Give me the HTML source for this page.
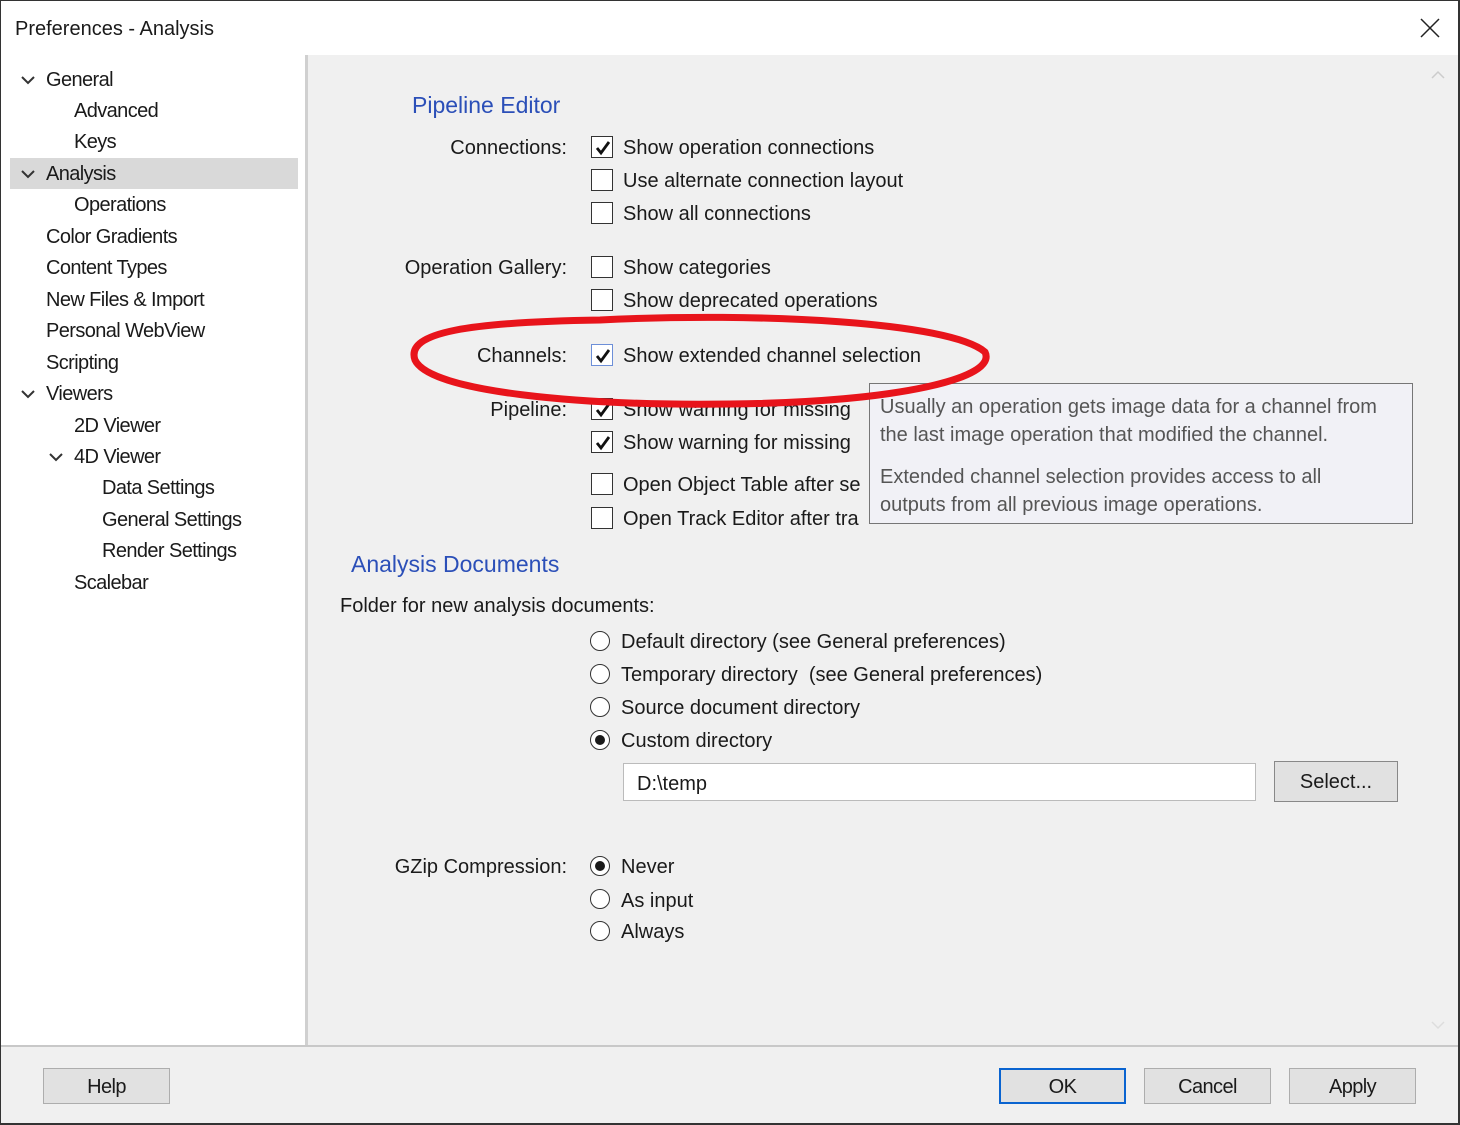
<!DOCTYPE html>
<html><head><meta charset="utf-8"><style>
*{margin:0;padding:0;box-sizing:border-box}
body{width:1460px;height:1125px;position:relative;overflow:hidden;background:#f0f0f0;font-family:"Segoe UI","Liberation Sans",sans-serif;font-size:20px;color:#1a1a1a}
.a{position:absolute;white-space:nowrap;line-height:24px}
.t{letter-spacing:-0.6px}
.r{position:absolute;white-space:nowrap;line-height:24px;text-align:right;right:893px}
.cb{position:absolute;left:591px;width:22px;height:22px;border:1px solid #333;background:#fff}
.cb svg{position:absolute;left:2px;top:2px}
.rd{position:absolute;left:590px;width:20px;height:20px;border:1px solid #333;border-radius:50%;background:#fff}
.rd.on::after{content:"";position:absolute;left:4px;top:4px;width:10px;height:10px;border-radius:50%;background:#1a1a1a}
.btn{position:absolute;height:36px;width:127px;background:#e1e1e1;border:1px solid #adadad;text-align:center;line-height:34px}
.chev{position:absolute}
h2{position:absolute;font-weight:normal;font-size:23px;color:#2b4fb8;line-height:28px;white-space:nowrap}
</style></head><body>
<div style="position:absolute;left:0;top:0;width:1460px;height:55px;background:#fff"></div>
<div class="a" style="left:15px;top:17px;font-size:20px">Preferences - Analysis</div>
<svg class="chev" style="left:1420px;top:18px" width="20" height="20"><path d="M1 1L19 19M19 1L1 19" stroke="#222" stroke-width="1.5"/></svg>
<!-- tree -->
<div style="position:absolute;left:0;top:55px;width:305px;height:990px;background:#fff"></div>
<div style="position:absolute;left:305px;top:55px;width:3px;height:990px;background:#d0d0d0"></div>
<div style="position:absolute;left:10px;top:158px;width:288px;height:31px;background:#d9d9d9"></div>
<svg class="chev" style="left:20px;top:75px" width="16" height="10"><path d="M2 2L8 8L14 2" stroke="#333" stroke-width="2" fill="none"/></svg>
<svg class="chev" style="left:20px;top:169px" width="16" height="10"><path d="M2 2L8 8L14 2" stroke="#333" stroke-width="2" fill="none"/></svg>
<svg class="chev" style="left:20px;top:389px" width="16" height="10"><path d="M2 2L8 8L14 2" stroke="#333" stroke-width="2" fill="none"/></svg>
<svg class="chev" style="left:48px;top:452px" width="16" height="10"><path d="M2 2L8 8L14 2" stroke="#333" stroke-width="2" fill="none"/></svg>
<div class="a t" style="left:46px;top:68px">General</div>
<div class="a t" style="left:74px;top:99px">Advanced</div>
<div class="a t" style="left:74px;top:130px">Keys</div>
<div class="a t" style="left:46px;top:162px">Analysis</div>
<div class="a t" style="left:74px;top:193px">Operations</div>
<div class="a t" style="left:46px;top:225px">Color Gradients</div>
<div class="a t" style="left:46px;top:256px">Content Types</div>
<div class="a t" style="left:46px;top:288px">New Files &amp; Import</div>
<div class="a t" style="left:46px;top:319px">Personal WebView</div>
<div class="a t" style="left:46px;top:351px">Scripting</div>
<div class="a t" style="left:46px;top:382px">Viewers</div>
<div class="a t" style="left:74px;top:414px">2D Viewer</div>
<div class="a t" style="left:74px;top:445px">4D Viewer</div>
<div class="a t" style="left:102px;top:476px">Data Settings</div>
<div class="a t" style="left:102px;top:508px">General Settings</div>
<div class="a t" style="left:102px;top:539px">Render Settings</div>
<div class="a t" style="left:74px;top:571px">Scalebar</div>
<!-- scroll arrows -->
<svg class="chev" style="left:1430px;top:70px" width="16" height="10"><path d="M2 8L8 2L14 8" stroke="#ccc" stroke-width="1.5" fill="none"/></svg>
<svg class="chev" style="left:1430px;top:1020px" width="16" height="10"><path d="M2 2L8 8L14 2" stroke="#ddd" stroke-width="1.5" fill="none"/></svg>
<!-- pipeline editor -->
<h2 style="left:412px;top:91px">Pipeline Editor</h2>
<div class="r" style="top:136px">Connections:</div>
<div class="cb" style="top:136px"><svg width="18" height="18"><path d="M3 9L7 14L15 3" stroke="#111" stroke-width="2.8" fill="none"/></svg></div>
<div class="a" style="left:623px;top:136px">Show operation connections</div>
<div class="cb" style="top:169px"></div><div class="a" style="left:623px;top:169px">Use alternate connection layout</div>
<div class="cb" style="top:202px"></div><div class="a" style="left:623px;top:202px">Show all connections</div>
<div class="r" style="top:256px">Operation Gallery:</div>
<div class="cb" style="top:256px"></div><div class="a" style="left:623px;top:256px">Show categories</div>
<div class="cb" style="top:289px"></div><div class="a" style="left:623px;top:289px">Show deprecated operations</div>
<div class="r" style="top:344px">Channels:</div>
<div class="cb" style="top:344px;border-color:#6d8fd8"><svg width="18" height="18"><path d="M3 9L7 14L15 3" stroke="#111" stroke-width="2.8" fill="none"/></svg></div>
<div class="a" style="left:623px;top:344px">Show extended channel selection</div>
<div class="r" style="top:398px">Pipeline:</div>
<div class="cb" style="top:398px"><svg width="18" height="18"><path d="M3 9L7 14L15 3" stroke="#111" stroke-width="2.8" fill="none"/></svg></div>
<div class="a" style="left:623px;top:398px">Show warning for missing</div>
<div class="cb" style="top:431px"><svg width="18" height="18"><path d="M3 9L7 14L15 3" stroke="#111" stroke-width="2.8" fill="none"/></svg></div>
<div class="a" style="left:623px;top:431px">Show warning for missing</div>
<div class="cb" style="top:473px"></div><div class="a" style="left:623px;top:473px">Open Object Table after se</div>
<div class="cb" style="top:507px"></div><div class="a" style="left:623px;top:507px">Open Track Editor after tra</div>
<!-- tooltip -->
<div style="position:absolute;left:869px;top:383px;width:544px;height:141px;background:#f1f1f6;border:1px solid #767676"></div>
<div class="a" style="left:880px;top:395px;color:#555">Usually an operation gets image data for a channel from</div>
<div class="a" style="left:880px;top:423px;color:#555">the last image operation that modified the channel.</div>
<div class="a" style="left:880px;top:465px;color:#555">Extended channel selection provides access to all</div>
<div class="a" style="left:880px;top:493px;color:#555">outputs from all previous image operations.</div>
<!-- red ellipse -->
<svg style="position:absolute;left:0;top:0" width="1460" height="1125"><path d="M600 320C760 312 950 322 985 352C998 378 900 402 730 404C580 406 430 392 415 360C405 332 470 322 600 320Z" stroke="#e8141b" stroke-width="7" fill="none" stroke-linejoin="round"/></svg>
<!-- analysis documents -->
<h2 style="left:351px;top:550px">Analysis Documents</h2>
<div class="a" style="left:340px;top:594px">Folder for new analysis documents:</div>
<div class="rd" style="top:631px"></div><div class="a" style="left:621px;top:630px">Default directory (see General preferences)</div>
<div class="rd" style="top:664px"></div><div class="a" style="left:621px;top:663px">Temporary directory&nbsp; (see General preferences)</div>
<div class="rd" style="top:697px"></div><div class="a" style="left:621px;top:696px">Source document directory</div>
<div class="rd on" style="top:730px"></div><div class="a" style="left:621px;top:729px">Custom directory</div>
<div style="position:absolute;left:623px;top:763px;width:633px;height:38px;background:#fff;border:1px solid #bbb"></div>
<div class="a" style="left:637px;top:772px">D:\temp</div>
<div class="btn" style="left:1274px;top:761px;width:124px;height:41px;line-height:41px;border-color:#888">Select...</div>
<div class="r" style="top:855px">GZip Compression:</div>
<div class="rd on" style="top:856px"></div><div class="a" style="left:621px;top:855px">Never</div>
<div class="rd" style="top:889px"></div><div class="a" style="left:621px;top:889px">As input</div>
<div class="rd" style="top:921px"></div><div class="a" style="left:621px;top:920px">Always</div>
<!-- bottom -->
<div style="position:absolute;left:0;top:1045px;width:1460px;height:2px;background:#c8c8c8"></div>
<div class="btn t" style="left:43px;top:1068px;line-height:36px">Help</div>
<div class="btn t" style="left:999px;top:1068px;border:2px solid #0a64d0;line-height:34px">OK</div>
<div class="btn t" style="left:1144px;top:1068px;line-height:36px">Cancel</div>
<div class="btn t" style="left:1289px;top:1068px;line-height:36px">Apply</div>
<div style="position:absolute;left:0;top:0;width:1460px;height:1125px;border:1px solid #333;border-right-width:2px;border-bottom-width:2px"></div>
</body></html>
